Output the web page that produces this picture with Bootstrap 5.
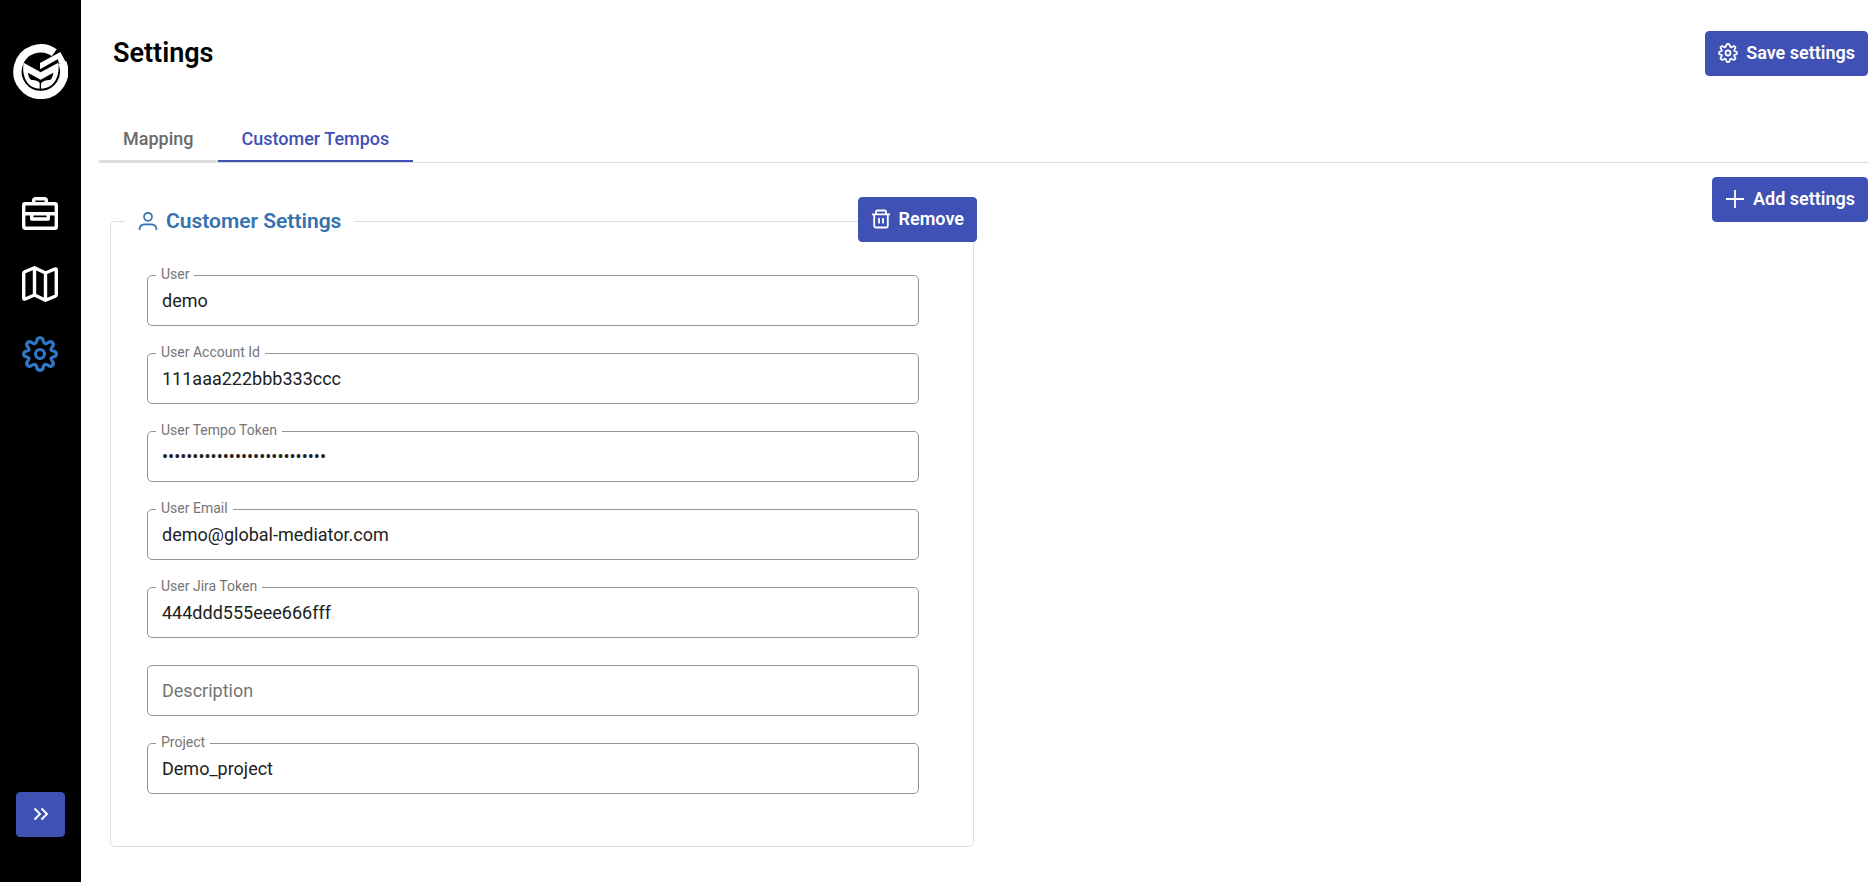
<!DOCTYPE html>
<html lang="en">
<head>
<meta charset="utf-8">
<meta name="viewport" content="width=device-width, initial-scale=1">
<title>Settings</title>
<link href="https://cdn.jsdelivr.net/npm/bootstrap@5.3.0/dist/css/bootstrap.min.css" rel="stylesheet">
<style>
  body { font-family: Roboto, "Liberation Sans", sans-serif; font-size: 18px; line-height: 24px; color: #212121; }
  .side-rail { width: 81px; background: #000; padding: 44px 0 45px; }
  .rail-links { margin-top: 95px; gap: 30px; padding-right: 1px; }
  .rail-links a { color: #fff; line-height: 0; }
  .rail-links a.current { color: #2f78c8; }
  .btn-indigo {
    --bs-btn-color: #fff; --bs-btn-bg: #3f51b5; --bs-btn-border-color: #3f51b5;
    --bs-btn-hover-color: #fff; --bs-btn-hover-bg: #35449a; --bs-btn-hover-border-color: #35449a;
    --bs-btn-active-color: #fff; --bs-btn-active-bg: #303f8f; --bs-btn-active-border-color: #303f8f;
    --bs-btn-font-size: 18px; --bs-btn-font-weight: 600; --bs-btn-line-height: 24px;
    --bs-btn-border-radius: 4px; --bs-btn-padding-x: 12px; --bs-btn-padding-y: 0;
    height: 45px; padding-bottom: 2px;
  }
  .rail-toggle { width: 49px; }
  .page-head { padding: 31px 1px 0 32px; }
  .page-title { font-size: 27px; line-height: 32px; font-weight: 600; color: #000; padding-bottom: 2px; }
  .page-tabs { margin: 38px 0 0 18px; border-bottom: 1px solid #dedede; }
  .page-tabs .nav-link { padding: 13px 24px 9px; font-size: 18px; font-weight: 500; color: #6b6b6b; border-bottom: 2px solid #dedede; }
  .page-tabs .nav-link.active { color: #3f51b5; border-bottom-color: #3f51b5; }
  .tab-body { padding: 14px 1px 32px 29px; }
  .group-form { margin-right: 15px; }
  .settings-group { border: 1px solid #dedede; border-radius: 5px; padding: 42px 54px 52px 36px; margin-top: 32px; }
  .group-title { font-size: 21px; line-height: 24px; font-weight: 600; color: #3572b0; padding: 0 13px; margin: 0 0 0 -22px; }
  .remove-spot { top: 20px; right: 12px; }
  .field-list { gap: 27px; }
  .outlined { height: 51px; padding: 12px 14px; font-size: 18px; line-height: 24px; color: #212121; border: 1px solid #949494; border-radius: 5px; }
  .outlined::placeholder { color: #757575; }
  .notch { top: -10px; left: 9px; padding: 0 5px; font-size: 14px; line-height: 18px; color: #757575; background: #fff; }
</style>
</head>
<body>
<div class="d-flex min-vh-100">
  <aside class="side-rail d-flex flex-column align-items-center flex-shrink-0">
    <a href="#" aria-label="Home" class="lh-1">
      <svg class="d-block" width="55" height="55" viewBox="39 71 165 165">
        <g fill="none" stroke="#fff">
          <path stroke-width="25" d="M163 97A70 70 0 1 0 187 127"/>
        </g>
        <path fill="#fff" d="M181 95L120 128V147L173 117L178 130L200 130Z"/>
        <path fill="#fff" fill-rule="evenodd" d="M71 127L122 156L175 127C180 160 167 205 122 205C77 205 65 160 71 127ZM84 157L122 178L160 157C159 168 155 175 150 179Q132 178 122 190Q112 178 94 179C88 174 85 168 84 157Z"/>
        <path stroke="#000" stroke-width="4" d="M121 186V210"/>
      </svg>
    </a>
    <nav class="rail-links d-flex flex-column align-items-center">
      <a href="#" aria-label="Projects">
        <svg width="40" height="40" viewBox="0 0 40 40" fill="none" stroke="currentColor" stroke-width="3.4" stroke-linejoin="round">
          <rect x="3.7" y="9.7" width="32.6" height="24.6" rx="1.5"/><path d="M13.7 9V6.5Q13.7 4.7 15.5 4.7H24.500Q26.300 4.700 26.300 6.500V9M3.700 19.700H36.300M11.700 19.700V25H28.300V19.700"/>
        </svg>
      </a>
      <a href="#" aria-label="Map">
        <svg width="40" height="40" viewBox="0 0 40 40" fill="none" stroke="currentColor" stroke-width="3.4" stroke-linejoin="round">
          <path d="M14.500 3.700L4.800 7.800Q3.700 8.300 3.700 9.500V34Q3.700 35.600 5.200 35L14.500 31L25.500 36.300L35.200 32.200Q36.300 31.700 36.300 30.500V6Q36.300 4.400 34.800 5L25.500 9ZM14.500 3.700V31M25.500 9V36.300"/>
        </svg>
      </a>
      <a href="#" aria-label="Settings" class="current">
        <svg width="40" height="40" viewBox="0 0 40 40" fill="none" stroke="currentColor" stroke-width="3.2" stroke-linejoin="round">
          <path id="cog" d="M16.6 7.500C17 2.500 23 2.500 23.400 7.500Q24.500 10.800 27.500 9C31.300 5.800 35.300 9.500 32 13.300Q29.500 16.300 33 17C37.500 17.500 37.500 22.500 33 23Q29.500 23.700 32 26.700C35.300 30.500 31.300 34.200 27.500 31Q24.500 29.200 23.400 32.500C23 37.500 17 37.500 16.600 32.500Q15.500 29.200 12.500 31C8.700 34.200 4.700 30.500 8 26.700Q10.500 23.700 7 23C2.500 22.500 2.500 17.500 7 17Q10.500 16.300 8 13.300C4.700 9.500 8.700 5.800 12.500 9Q15.500 10.800 16.600 7.500Z"/>
          <circle id="hub" cx="20" cy="20" r="4.500"/>
        </svg>
      </a>
    </nav>
    <button type="button" class="btn btn-indigo rail-toggle mt-auto" aria-label="Expand menu">
      <svg class="d-block mx-auto" width="16" height="14" viewBox="0 0 16 14" fill="none" stroke="currentColor" stroke-width="2"><path d="M1.500 1.500L7 7L1.500 12.500M8.500 1.500L14 7L8.500 12.500"/></svg>
    </button>
  </aside>

  <main class="flex-grow-1">
    <header class="page-head d-flex align-items-center justify-content-between">
      <h1 class="page-title m-0">Settings</h1>
      <button type="button" class="btn btn-indigo d-flex align-items-center gap-2">
        <svg width="20" height="20" viewBox="2 2 36 36" fill="none" stroke="currentColor" stroke-width="3.200"><use href="#cog"/><use href="#hub"/></svg>
        Save settings
      </button>
    </header>

    <ul class="page-tabs nav">
      <li><a class="nav-link" href="#">Mapping</a></li>
      <li><a class="nav-link active" href="#" aria-current="page">Customer Tempos</a></li>
    </ul>

    <div class="tab-body d-flex">
      <section class="w-50 position-relative">
        <form class="group-form">
          <fieldset class="settings-group">
            <legend class="group-title float-none w-auto d-flex align-items-center gap-2">
              <svg width="20" height="20" viewBox="0 0 20 20" fill="none" stroke="currentColor" stroke-width="1.700"><circle cx="10" cy="5.800" r="4"/><path d="M1.500 19V18Q2 13.300 7 13.300H13Q18 13.300 18.500 18V19"/></svg>
              Customer Settings
            </legend>
            <div class="field-list d-flex flex-column">
              <div class="position-relative">
                <input class="form-control outlined" id="user" type="text" value="demo">
                <label class="notch position-absolute" for="user">User</label>
              </div>
              <div class="position-relative">
                <input class="form-control outlined" id="account" type="text" value="111aaa222bbb333ccc">
                <label class="notch position-absolute" for="account">User Account Id</label>
              </div>
              <div class="position-relative">
                <input class="form-control outlined" id="tempo" type="password" value="abcdefghijklmnopqrstuvwxyz1">
                <label class="notch position-absolute" for="tempo">User Tempo Token</label>
              </div>
              <div class="position-relative">
                <input class="form-control outlined" id="email" type="email" value="demo@global-mediator.com">
                <label class="notch position-absolute" for="email">User Email</label>
              </div>
              <div class="position-relative">
                <input class="form-control outlined" id="jira" type="text" value="444ddd555eee666fff">
                <label class="notch position-absolute" for="jira">User Jira Token</label>
              </div>
              <div>
                <input class="form-control outlined" id="description" type="text" placeholder="Description" aria-label="Description">
              </div>
              <div class="position-relative">
                <input class="form-control outlined" id="project" type="text" value="Demo_project">
                <label class="notch position-absolute" for="project">Project</label>
              </div>
            </div>
          </fieldset>
          <button type="button" class="btn btn-indigo remove-spot position-absolute d-flex align-items-center gap-2">
            <svg width="20" height="20" viewBox="0 0 20 20" fill="none" stroke="currentColor" stroke-width="1.800"><path d="M1 5.300H19M5 5V2.800Q5 1.500 6.300 1.500H13.700Q15 1.500 15 2.800V5M3.200 5.300V17Q3.200 18.500 4.700 18.500H15.300Q16.800 18.500 16.800 17V5.300M8 9V14.500M12 9V14.500"/></svg>
            Remove
          </button>
        </form>
      </section>
      <div class="ms-auto">
        <button type="button" class="btn btn-indigo d-flex align-items-center gap-2">
          <svg width="20" height="20" viewBox="0 0 20 20" fill="none" stroke="currentColor" stroke-width="1.800"><path d="M10 1V19M1 10H19"/></svg>
          Add settings
        </button>
      </div>
    </div>
  </main>
</div>
<script src="https://cdn.jsdelivr.net/npm/bootstrap@5.3.0/dist/js/bootstrap.bundle.min.js"></script>
</body>
</html>
